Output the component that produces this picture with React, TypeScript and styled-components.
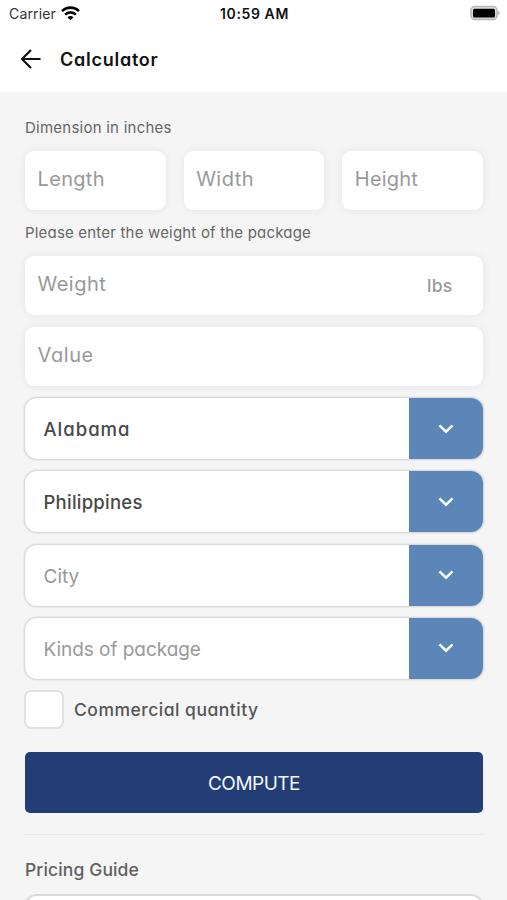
import React from 'react';
import styled, { createGlobalStyle } from 'styled-components';

const GlobalStyle = createGlobalStyle`
  * { box-sizing: border-box; }
  html, body { margin: 0; height: 900px; overflow: hidden; background: #f5f5f5; }
  body {
    font-family: Inter, "Open Sans", sans-serif;
    color: #555;
  }
  input, button { font: inherit; }
`;

const Screen = styled.div`
  display: flex;
  flex-direction: column;
  width: 507px;
  height: 900px;
  overflow: hidden;
  background: #f5f5f5;
  font-feature-settings: 'cv11';
`;

const Header = styled.header`
  flex: none;
  height: 92px;
  background: #fff;
  color: #111;
`;

const StatusBar = styled.div`
  display: grid;
  grid-template-columns: 1fr auto 1fr;
  align-items: center;
  height: 26px;
  padding: 0 7px 0 9px;
  font-feature-settings: normal;
`;

const Carrier = styled.div`
  display: flex;
  align-items: center;
  gap: 5.5px;
  font-size: 14px;
  letter-spacing: 0.15px;
  color: #333;
`;

const Clock = styled.div`
  font-size: 14px;
  font-weight: 600;
  letter-spacing: 0.6px;
`;

const Battery = styled.svg`
  justify-self: end;
`;

const NavBar = styled.div`
  display: flex;
  align-items: center;
  gap: 18px;
  height: 66px;
  padding-left: 20px;
`;

const Title = styled.h1`
  margin: 0;
  font-size: 18px;
  font-weight: 600;
  letter-spacing: 0.75px;
`;

const Form = styled.main`
  display: flex;
  flex-direction: column;
  padding: 26px 24px 0 25px;
`;

const Caption = styled.div<{ $track: number }>`
  height: 20px;
  line-height: 20px;
  font-size: 15px;
  letter-spacing: ${p => p.$track}px;
  color: #666;
`;

const Dimensions = styled.div`
  display: grid;
  grid-template-columns: repeat(3, 1fr);
  gap: 18px;
  margin: 13px 0 13px;
`;

const Field = styled.div<{ $gap?: number; $track: number }>`
  display: flex;
  align-items: center;
  justify-content: space-between;
  height: 59px;
  margin-top: ${p => p.$gap ?? 0}px;
  padding: 0 30.5px 4px 12.5px;
  border-radius: 9px;
  background: #fff;
  box-shadow: 0 0 10px rgba(0, 0, 0, 0.07);
  font-size: 20px;
  line-height: 24px;
  letter-spacing: ${p => p.$track}px;
  color: #999;
`;

const Unit = styled.span`
  padding-top: 4px;
  font-size: 17.5px;
  font-weight: 500;
  letter-spacing: 0.3px;
`;

const Selects = styled.div`
  display: flex;
  flex-direction: column;
  gap: 10.3px;
  margin: 11px -1px 0;
`;

const Select = styled.div<{ $chosen?: boolean; $track: number }>`
  display: flex;
  height: 63px;
  border: 1.5px solid #dadada;
  border-radius: 13px;
  background: #fff;
  box-shadow: 0 0 2px rgba(0, 0, 0, 0.16);
  overflow: hidden;
  font-size: ${p => (p.$chosen ? 18.5 : 19)}px;
  font-weight: ${p => (p.$chosen ? 500 : 400)};
  letter-spacing: ${p => p.$track}px;
  color: ${p => (p.$chosen ? '#484848' : '#999')};
`;

const SelectText = styled.span`
  flex: 1;
  padding-left: 18.5px;
  line-height: 63px;
`;

const SelectArrow = styled.span`
  display: flex;
  align-items: center;
  justify-content: center;
  width: 75px;
  margin-right: -1px;
  padding-right: 2px;
  background: #5b86b7;
`;

const CheckRow = styled.label`
  display: flex;
  align-items: center;
  gap: 10.5px;
  margin: 10px 0 0 -1px;
  font-size: 17.5px;
  font-weight: 500;
  letter-spacing: 0.5px;
`;

const CheckBox = styled.span`
  width: 39.5px;
  height: 39.5px;
  border: 2px solid #e1e1e1;
  border-radius: 7px;
  background: #fff;
`;

const Submit = styled.button`
  height: 61px;
  margin: 22.5px 0 0;
  padding: 2px 0 0;
  border: 0;
  border-radius: 5px;
  background: #233d77;
  color: #f5f7fc;
  font-size: 19px;
  letter-spacing: -0.5px;
`;

const Divider = styled.hr`
  width: 460px;
  height: 1px;
  margin: 21.5px 0 0 -1px;
  border: 0;
  background: #ebebeb;
`;

const SectionTitle = styled.h2`
  margin: 22.5px 0 0;
  height: 24px;
  line-height: 24px;
  font-size: 17.5px;
  font-weight: 500;
  letter-spacing: 0.13px;
  color: #606060;
`;

const GuideCard = styled.div`
  height: 63px;
  margin: 12px -1px 0;
  border: 2px solid #dadada;
  border-radius: 13px;
  background: #fff;
`;

const selects = [
  { text: 'Alabama', chosen: true, track: 1 },
  { text: 'Philippines', chosen: true, track: 0.24 },
  { text: 'City', chosen: false, track: 0 },
  { text: 'Kinds of package', chosen: false, track: -0.05 },
];

const WifiIcon = () => (
  <svg width="19" height="15" viewBox="0 0 19 15" fill="none" stroke="#000" strokeWidth="2.6">
    <path d="M1 5.2a12 12 0 0 1 17 0" />
    <path d="M4.1 8.6a7.6 7.6 0 0 1 10.8 0" />
    <path d="M6.6 11.4a3.9 3.9 0 0 1 5.8 0L9.5 14.2Z" fill="#000" stroke="none" />
  </svg>
);

const BackIcon = () => (
  <svg width="22" height="20" viewBox="0 0 22 20" fill="none" stroke="#111" strokeWidth="2.2">
    <path d="M20.5 10H2M11 1 2 10l9 9" strokeLinejoin="round" />
  </svg>
);

const ChevronIcon = () => (
  <svg width="16" height="10" viewBox="0 0 16 10" fill="none" stroke="#fff" strokeWidth="2.4">
    <path d="m1.5 1.3 6.5 6.4 6.5-6.4" />
  </svg>
);

export default function App() {
  return (
    <Screen>
      <GlobalStyle />
      <Header>
        <StatusBar>
          <Carrier>
            Carrier
            <WifiIcon />
          </Carrier>
          <Clock>10:59 AM</Clock>
          <Battery width="30" height="16" viewBox="0 0 30 16">
            <rect x="1" y="1.5" width="26" height="13" rx="4" fill="#ddd" stroke="#b8b8b8" strokeWidth="1.6" />
            <rect x="3" y="3.7" width="22" height="8.8" rx="1.6" fill="#000" />
            <path d="M28.2 5.9c2 .6 2 3.6 0 4.2Z" fill="#b0b0b0" />
          </Battery>
        </StatusBar>
        <NavBar>
          <BackIcon />
          <Title>Calculator</Title>
        </NavBar>
      </Header>
      <Form>
        <Caption $track={0.24}>Dimension in inches</Caption>
        <Dimensions>
          <Field $track={0.33}>Length</Field>
          <Field $track={0.5}>Width</Field>
          <Field $track={0.2}>Height</Field>
        </Dimensions>
        <Caption $track={0.19}>Please enter the weight of the package</Caption>
        <Field $gap={13} $track={0.5}>
          Weight
          <Unit>lbs</Unit>
        </Field>
        <Field $gap={12} $track={0.6}>Value</Field>
        <Selects>
          {selects.map(s => (
            <Select key={s.text} $chosen={s.chosen} $track={s.track}>
              <SelectText>{s.text}</SelectText>
              <SelectArrow>
                <ChevronIcon />
              </SelectArrow>
            </Select>
          ))}
        </Selects>
        <CheckRow>
          <CheckBox />
          Commercial quantity
        </CheckRow>
        <Submit type="button">COMPUTE</Submit>
        <Divider />
        <SectionTitle>Pricing Guide</SectionTitle>
        <GuideCard />
      </Form>
    </Screen>
  );
}
